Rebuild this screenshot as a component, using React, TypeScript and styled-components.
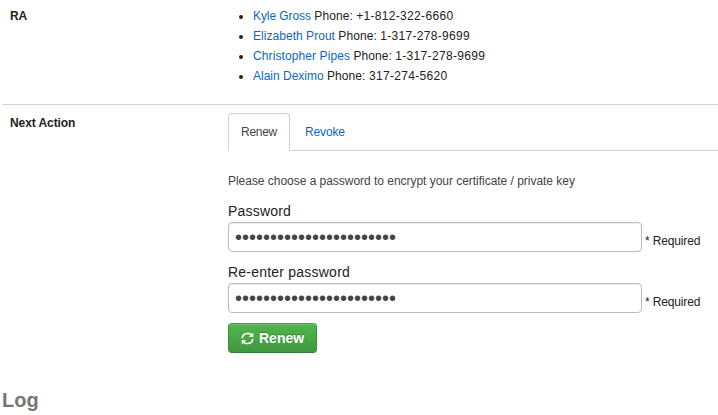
import React from "react";
import styled, { createGlobalStyle } from "styled-components";

const Global = createGlobalStyle`
  * { box-sizing: border-box; }
  html, body { margin: 0; padding: 0; background: #fff; overflow: hidden; }
  body { font: 12px/20px "Liberation Sans", Arial, sans-serif; color: #222; }
`;
const Page = styled.main`
  width: 718px;
  height: 415px;
  padding-left: 2px;
  overflow: hidden;
`;
const Row = styled.section<{ $height: number; $ruled?: boolean }>`
  display: grid;
  grid-template-columns: 218px 1fr;
  height: ${(p) => p.$height}px;
  padding: ${(p) => (p.$ruled ? "8px 0 0 8px" : "6px 0 0 8px")};
  border-top: ${(p) => (p.$ruled ? "1px solid #d0d0d0" : "0")};
`;
const Term = styled.div`
  font-weight: bold;
  letter-spacing: -0.08px;
`;
const Line = styled.span<{ $spacing?: number }>`
  white-space: nowrap;
  letter-spacing: ${(p) => p.$spacing ?? 0}px;
`;
const Contacts = styled.ul`
  margin: 0;
  padding: 0 0 0 25px;
`;
const Contact = styled.li`
  height: 20px;
  white-space: nowrap;
`;
const Link = styled.a<{ $spacing: number }>`
  color: #0e67bd;
  text-decoration: none;
  letter-spacing: ${(p) => p.$spacing}px;
`;
const Tabs = styled.nav`
  display: flex;
  height: 38px;
  border-bottom: 1px solid #d0d0d0;
  gap: 2px;
`;
const Tab = styled.a<{ $active?: boolean }>`
  height: 38px;
  padding: 8px 12px;
  border: 1px solid ${(p) => (p.$active ? "#d0d0d0" : "transparent")};
  border-bottom-color: ${(p) => (p.$active ? "#fff" : "transparent")};
  border-radius: 4px 4px 0 0;
  color: ${(p) => (p.$active ? "#444" : "#0e67bd")};
  letter-spacing: ${(p) => (p.$active ? "-0.27px" : "-0.15px")};
`;
const Hint = styled.p`
  margin: 20px 0 10px;
  color: #444;
`;
const Field = styled.div`
  height: 61px;
`;
const Label = styled.label`
  display: block;
  height: 21px;
  font-size: 14px;
  line-height: 21px;
`;
const Control = styled.div`
  display: flex;
  gap: 3px;
`;
const Input = styled.input`
  width: 414px;
  height: 30px;
  padding: 4px 6px;
  border: 1px solid #bbb;
  border-radius: 4px;
  box-shadow: inset 0 1px 1px rgba(0, 0, 0, 0.075);
  color: #444;
  font: 20px/20px "Liberation Sans", Arial, sans-serif;
  outline: none;
`;
const Required = styled.span`
  padding-top: 9px;
  white-space: nowrap;
  letter-spacing: -0.15px;
`;
const Button = styled.button`
  display: flex;
  align-items: center;
  gap: 5px;
  width: 89px;
  height: 30px;
  padding: 0 0 0 12px;
  border: 1px solid #3b8a3b;
  border-color: #429f42 #3b8f3b #357c35;
  border-radius: 4px;
  background: linear-gradient(#4fb84c, #409640);
  box-shadow: inset 0 1px 0 rgba(255, 255, 255, 0.15);
  color: #fff;
  font: bold 14px/20px "Liberation Sans", Arial, sans-serif;
  text-shadow: 0 -1px 0 rgba(0, 0, 0, 0.25);
`;
const Heading = styled.h2`
  margin: 9px 0 0;
  color: #777570;
  font-size: 20px;
  line-height: 24px;
`;

const contacts = [
  { name: "Kyle Gross", phone: "+1-812-322-6660", spacing: -0.07 },
  { name: "Elizabeth Prout", phone: "1-317-278-9699", spacing: 0.04 },
  { name: "Christopher Pipes", phone: "1-317-278-9699", spacing: 0.1 },
  { name: "Alain Deximo", phone: "317-274-5620", spacing: 0 },
];

function RefreshIcon() {
  return (
    <svg width="13" height="13" viewBox="0 0 13 13" fill="none" stroke="#fff" strokeWidth="1.7">
      <path d="M1.3 6.2C1.3 3.4 3.4 1.5 6 1.5H8.2C9.2 1.7 9.9 2.3 10.4 3" />
      <path d="M11.7 6.8C11.7 9.6 9.6 11.5 7 11.5H4.8C3.8 11.3 3.1 10.7 2.6 10" />
      <path d="M12.3 .6V5.1H7.8Z M.7 12.4V7.9H5.2Z" fill="#fff" stroke="none" />
    </svg>
  );
}

function PasswordField({ id, label, spacing }: { id: string; label: string; spacing: number }) {
  return (
    <Field>
      <Label htmlFor={id}><Line $spacing={spacing}>{label}</Line></Label>
      <Control>
        <Input id={id} type="password" readOnly value={"x".repeat(23)} />
        <Required>* Required</Required>
      </Control>
    </Field>
  );
}

export default function App() {
  return (
    <>
      <Global />
      <Page>
        <Row $height={104}>
          <Term>RA</Term>
          <Contacts>
            {contacts.map((c) => (
              <Contact key={c.name}>
                <Link $spacing={c.spacing}>{c.name}</Link>{" "}
                <Line $spacing={0.07}>Phone: </Line>
                <Line $spacing={0.32}>{c.phone}</Line>
              </Contact>
            ))}
          </Contacts>
        </Row>
        <Row $height={275} $ruled>
          <Term>Next Action</Term>
          <div>
            <Tabs>
              <Tab $active>Renew</Tab>
              <Tab>Revoke</Tab>
            </Tabs>
            <Hint><Line $spacing={-0.03}>Please choose a password to encrypt your certificate / private key</Line></Hint>
            <PasswordField id="password" label="Password" spacing={0.2} />
            <PasswordField id="confirm" label="Re-enter password" spacing={0.22} />
            <Button><RefreshIcon />Renew</Button>
          </div>
        </Row>
        <Heading>Log</Heading>
      </Page>
    </>
  );
}
